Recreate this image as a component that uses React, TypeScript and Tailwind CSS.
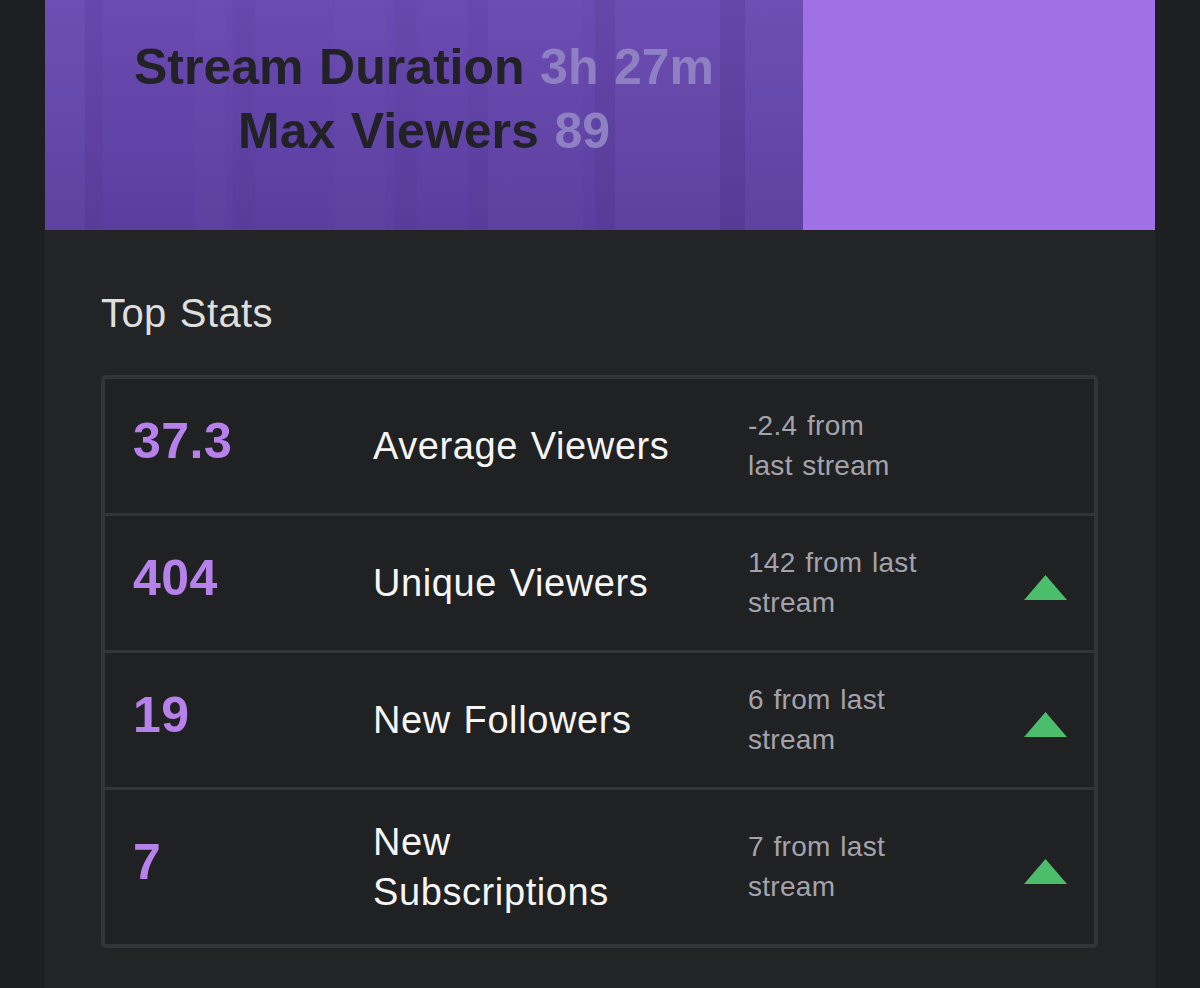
type StatRow = {
  value: string;
  label: string[];
  delta: string[];
  up: boolean;
};

const rows: StatRow[] = [
  { value: "37.3", label: ["Average Viewers"], delta: ["-2.4 from", "last stream"], up: false },
  { value: "404", label: ["Unique Viewers"], delta: ["142 from last", "stream"], up: true },
  { value: "19", label: ["New Followers"], delta: ["6 from last", "stream"], up: true },
  { value: "7", label: ["New", "Subscriptions"], delta: ["7 from last", "stream"], up: true },
];

// blurred stream thumbnail behind the banner text
function BannerBackdrop() {
  const bands = [
    { x: 0, w: 40, o: 0.025, c: "#ffffff" },
    { x: 40, w: 18, o: 0.03, c: "#000000" },
    { x: 150, w: 30, o: 0.015, c: "#ffffff" },
    { x: 188, w: 22, o: 0.025, c: "#000000" },
    { x: 290, w: 50, o: 0.015, c: "#ffffff" },
    { x: 350, w: 22, o: 0.025, c: "#000000" },
    { x: 423, w: 20, o: 0.025, c: "#000000" },
    { x: 443, w: 95, o: 0.015, c: "#ffffff" },
    { x: 550, w: 20, o: 0.045, c: "#000000" },
    { x: 570, w: 105, o: 0.02, c: "#ffffff" },
    { x: 675, w: 25, o: 0.05, c: "#000000" },
    { x: 700, w: 58, o: 0.025, c: "#ffffff" },
  ];
  return (
    <svg
      className="absolute inset-0 h-full w-full"
      viewBox="0 0 758 230"
      preserveAspectRatio="none"
    >
      {bands.map((b, i) => (
        <rect key={i} x={b.x} y={0} width={b.w} height={230} fill={b.c} opacity={b.o} />
      ))}
    </svg>
  );
}

function UpArrow() {
  return (
    <svg width="43" height="25" viewBox="0 0 43 25" className="mt-[8px] shrink-0">
      <polygon points="21.5,0 43,25 0,25" fill="#4cbd6a" />
    </svg>
  );
}

export default function App() {
  return (
    <div className="min-h-[988px] bg-[#1e1f20] px-[45px] font-['Liberation_Sans',Arial,sans-serif] [word-spacing:0.1em]">
      <div className="min-h-[988px] bg-[#232425]">
        {/* banner */}
        <div className="flex h-[230px]">
          <div className="relative w-[758px] bg-gradient-to-b from-[#6a4bb2] to-[#5a3e9f]">
            <BannerBackdrop />
            <div className="relative pt-[35px] text-center text-[50px] font-bold leading-[64px]">
              <div>
                <span className="text-[#222126]">Stream Duration</span>{" "}
                <span className="text-[#8f80c3]">3h 27m</span>
              </div>
              <div>
                <span className="text-[#222126]">Max Viewers</span>{" "}
                <span className="text-[#8f80c3]">89</span>
              </div>
            </div>
          </div>
          <div className="flex-1 bg-[#a070e7]" />
        </div>

        {/* top stats */}
        <div className="px-[56px] pt-[59px] pb-[40px]">
          <h2 className="mb-[38px] text-[40px] leading-[48px] tracking-[0.01em] text-[#dedede]">
            Top Stats
          </h2>
          <div className="w-[997px] overflow-hidden rounded-[5px] border-[4px] border-[#333437] bg-[#333437]">
            <div className="flex flex-col gap-[3px]">
              {rows.map((r) => (
                <div
                  key={r.value}
                  className="flex items-center bg-[#202123] py-[27px] pl-[28px] pr-[27px]"
                >
                  <div className="mb-[10px] w-[240px] text-[50px] font-bold leading-[50px] tracking-[0.01em] text-[#b681ea]">
                    {r.value}
                  </div>
                  <div className="w-[375px] text-[38px] leading-[50px] tracking-[0.6px] text-[#f5f5f5]">
                    {r.label.map((l) => (
                      <div key={l}>{l}</div>
                    ))}
                  </div>
                  <div className="flex-1 text-[28px] leading-[40px] tracking-[0.01em] text-[#a4a3ab]">
                    {r.delta.map((d) => (
                      <div key={d}>{d}</div>
                    ))}
                  </div>
                  {r.up && <UpArrow />}
                </div>
              ))}
            </div>
          </div>
        </div>
      </div>
    </div>
  );
}
